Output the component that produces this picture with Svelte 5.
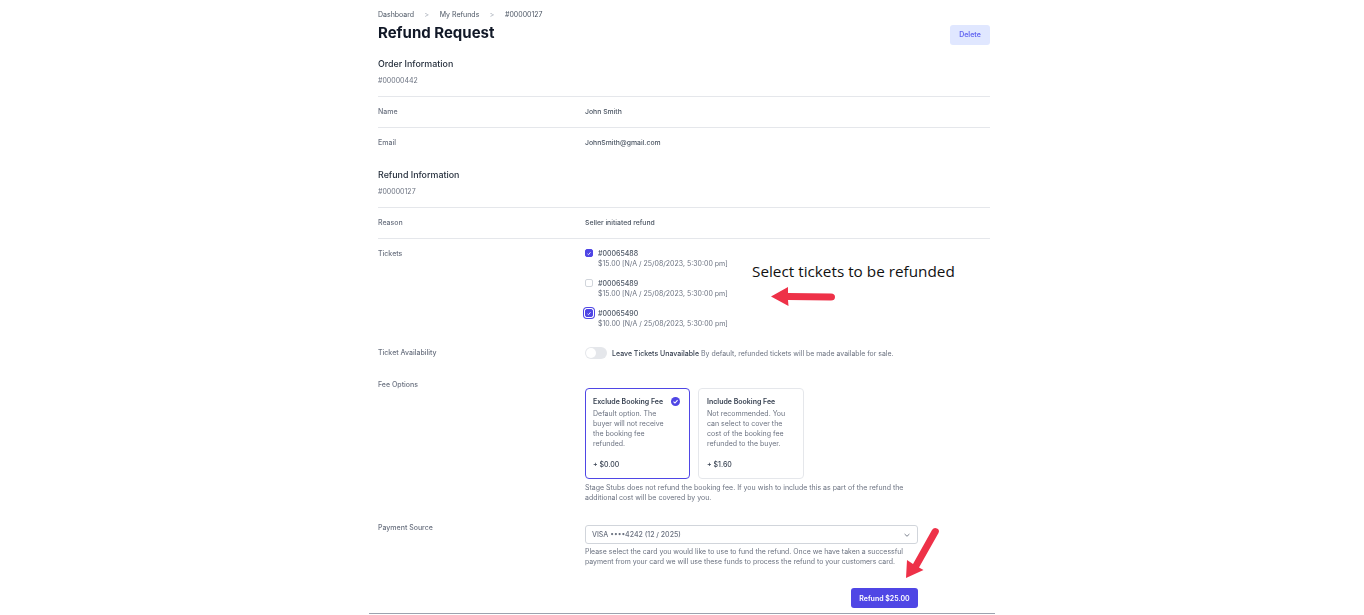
<script>
  const crumbs = ['Dashboard', 'My Refunds', '#00000127'];
  const tickets = [
    { id: '#00065488', info: '$15.00 [N/A / 25/08/2023, 5:30:00 pm]', checked: true },
    { id: '#00065489', info: '$15.00 [N/A / 25/08/2023, 5:30:00 pm]', checked: false },
    { id: '#00065490', info: '$10.00 [N/A / 25/08/2023, 5:30:00 pm]', checked: true, focus: true }
  ];
  const fees = [
    {
      title: 'Exclude Booking Fee',
      text: 'Default option. The buyer will not receive the booking fee refunded.',
      price: '+ $0.00',
      selected: true
    },
    {
      title: 'Include Booking Fee',
      text: 'Not recommended. You can select to cover the cost of the booking fee refunded to the buyer.',
      price: '+ $1.60',
      selected: false
    }
  ];
</script>

<div class="page">
  <main class="sheet">
    <header class="top">
      <div class="titles">
        <nav class="crumbs">
          {#each crumbs as crumb, i}
            {#if i > 0}<span class="sep">&gt;</span>{/if}
            <span>{crumb}</span>
          {/each}
        </nav>
        <h1>Refund Request</h1>
      </div>
      <button type="button" class="delete">Delete</button>
    </header>

    <section class="head first">
      <h2>Order Information</h2>
      <p>#00000442</p>
    </section>
    <div class="row line">
      <span class="label">Name</span>
      <span class="value">John Smith</span>
    </div>
    <div class="row line email-row">
      <span class="label">Email</span>
      <span class="value">JohnSmith@gmail.com</span>
    </div>

    <section class="head second">
      <h2>Refund Information</h2>
      <p>#00000127</p>
    </section>
    <div class="row line">
      <span class="label">Reason</span>
      <span class="value">Seller initiated refund</span>
    </div>

    <div class="row line tickets-row">
      <span class="label">Tickets</span>
      <div class="tickets">
        {#each tickets as t}
          <div class="ticket">
            <span class="box" class:on={t.checked} class:focus={t.focus}>
              {#if t.checked}
                <svg viewBox="0 0 10 10" width="7" height="7"><path d="M2.5 5.5 4.2 7 7.5 3" fill="none" stroke="#fff" stroke-width="1.4" /></svg>
              {/if}
            </span>
            <div>
              <div class="tid">{t.id}</div>
              <div class="tinfo">{t.info}</div>
            </div>
          </div>
        {/each}
      </div>
    </div>

    <div class="row avail-row">
      <span class="label">Ticket Availability</span>
      <div class="avail">
        <span class="toggle"><span class="knob"></span></span>
        <span class="strong">Leave Tickets Unavailable</span>
        <span class="hint">By default, refunded tickets will be made available for sale.</span>
      </div>
    </div>

    <div class="row fee-row">
      <span class="label">Fee Options</span>
      <div>
        <div class="cards">
          {#each fees as fee}
            <div class="card" class:selected={fee.selected}>
              <div class="card-title">{fee.title}</div>
              {#if fee.selected}
                <svg class="tick" viewBox="0 0 10 10" width="9" height="9">
                  <circle cx="5" cy="5" r="5" fill="#4f46e5" />
                  <path d="M2.8 5.2 4.4 6.7 7.3 3.6" fill="none" stroke="#fff" stroke-width="1.2" />
                </svg>
              {/if}
              <p>{fee.text}</p>
              <div class="price">{fee.price}</div>
            </div>
          {/each}
        </div>
        <p class="help fee-help">Stage Stubs does not refund the booking fee. If you wish to include this as part of the refund the additional cost will be covered by you.</p>
      </div>
    </div>

    <div class="row pay-row">
      <span class="label">Payment Source</span>
      <div>
        <div class="select">
          <span>VISA ••••4242 (12 / 2025)</span>
          <svg viewBox="0 0 10 10" width="8" height="8"><path d="M2 3.8 5 6.6 8 3.8" fill="none" stroke="#6b7280" stroke-width="1.1" /></svg>
        </div>
        <p class="help pay-help">Please select the card you would like to use to fund the refund. Once we have taken a successful payment from your card we will use these funds to process the refund to your customers card.</p>
      </div>
    </div>

    <div class="actions">
      <button type="button" class="refund">Refund $25.00</button>
    </div>
  </main>

  <div class="note">Select tickets to be refunded</div>
  <svg class="arrow-left" viewBox="0 0 66 21" width="66" height="21">
    <path d="M1 10.500 18 1 18 7 61 7.500Q65 7.500 65 11T61 14.500L18 14 18.500 20Z" fill="#ee3148" />
  </svg>
  <svg class="arrow-down" viewBox="0 0 36 56" width="36" height="56">
    <path d="M1 52 2 34 8 38 27 4Q29 1 32 2.500T33.500 7L14 41.500 18.500 44Z" fill="#ee3148" />
  </svg>
</div>

<style>
  :global(body) {
    background: #fff;
  }

  .page {
    position: relative;
    width: 1364px;
    height: 615px;
    overflow: hidden;
    background: #fff;
    font-family: Inter, 'Liberation Sans', sans-serif;
    font-size: 7px;
    color: #374151;
  }

  .sheet {
    width: 626px;
    height: 614px;
    box-sizing: border-box;
    margin-left: 369px;
    padding: 0 5px 0 9px;
    border-bottom: 1px solid #9ca3af;
    display: flex;
    flex-direction: column;
    filter: blur(0.3px);
  }

  .top {
    display: flex;
    justify-content: space-between;
    height: 45px;
    align-items: flex-end;
  }

  .titles {
    padding-bottom: 2px;
  }

  .crumbs {
    display: flex;
    align-items: center;
    height: 10px;
    color: #4b5563;
  }

  .sep {
    margin: 0 10.5px;
    color: #9ca3af;
  }

  h1 {
    margin: 4px 0 0;
    font-size: 15px;
    line-height: 20px;
    font-weight: 700;
    color: #111827;
  }

  .delete {
    width: 40px;
    height: 20px;
    padding: 0 0 1px;
    border: 0;
    border-radius: 3px;
    background: #e0e7ff;
    color: #6366f1;
    font: 600 7px Inter, 'Liberation Sans', sans-serif;
  }

  .head {
    box-sizing: border-box;
    border-bottom: 1px solid #e5e7eb;
  }

  .head.first {
    height: 52px;
    padding-top: 13px;
  }

  .head.second {
    height: 49px;
    padding-top: 10px;
  }

  h2 {
    margin: 0;
    font-size: 8.9px;
    line-height: 12px;
    font-weight: 500;
    color: #1f2937;
  }

  .head p {
    margin: 5px 0 0;
    line-height: 12px;
    color: #6b7280;
  }

  .row {
    display: grid;
    grid-template-columns: 207px 1fr;
    box-sizing: border-box;
    align-items: start;
  }

  .row.line {
    height: 31px;
    padding-top: 9px;
    line-height: 12px;
  }

  .head + .row.line {
    height: 30px;
  }

  .row.line + .row.line {
    border-top: 1px solid #e5e7eb;
  }

  .row.email-row {
    height: 32px;
  }

  .label {
    color: #6b7280;
    font-weight: 500;
    line-height: 12px;
  }

  .value {
    color: #4b5563;
    font-size: 6.85px;
    font-weight: 500;
  }

  .row.tickets-row {
    height: 99px;
  }

  .tickets {
    display: flex;
    flex-direction: column;
    gap: 10px;
    margin-top: 1px;
  }

  .ticket {
    display: flex;
    gap: 5px;
    height: 20px;
  }

  .box {
    box-sizing: border-box;
    width: 8px;
    height: 8px;
    border: 1px solid #d1d5db;
    border-radius: 2px;
    display: flex;
    align-items: center;
    justify-content: center;
  }

  .box.on {
    background: #4f46e5;
    border-color: #4f46e5;
  }

  .box.focus {
    box-shadow: 0 0 0 1px #fff, 0 0 0 2px #4f46e5;
  }

  .tid {
    font-weight: 500;
    line-height: 10px;
    color: #4b5563;
  }

  .tinfo {
    line-height: 10px;
    color: #6b7280;
  }

  .avail-row {
    height: 32px;
    padding-top: 10px;
  }

  .avail {
    display: flex;
    align-items: center;
    height: 12px;
  }

  .toggle {
    box-sizing: border-box;
    width: 22px;
    height: 12px;
    padding: 1px;
    margin-right: 5px;
    border-radius: 6px;
    background: #e5e7eb;
  }

  .knob {
    display: block;
    width: 10px;
    height: 10px;
    border-radius: 50%;
    background: #fff;
  }

  .strong {
    font-weight: 500;
    color: #374151;
    margin-right: 2px;
  }

  .hint {
    font-size: 6.95px;
    color: #6b7280;
  }

  .fee-row {
    height: 143px;
    padding-top: 10px;
  }

  .cards {
    display: flex;
    gap: 8px;
    margin-top: 9px;
  }

  .card {
    position: relative;
    box-sizing: border-box;
    width: 105px;
    height: 91px;
    padding: 8px 7px 7px;
    border: 1px solid #e5e7eb;
    border-radius: 4px;
    display: flex;
    flex-direction: column;
  }

  .card:last-child {
    width: 106px;
    padding-left: 8px;
  }

  .card.selected {
    border-color: #4f46e5;
  }

  .card-title {
    font-weight: 600;
    line-height: 10px;
    color: #374151;
  }

  .tick {
    position: absolute;
    top: 8px;
    right: 9px;
  }

  .card p {
    width: 80px;
    margin: 2px 0 0;
    line-height: 10px;
    color: #6b7280;
  }

  .price {
    margin-top: auto;
    line-height: 12px;
    font-weight: 500;
    color: #374151;
  }

  .help {
    margin: 0;
    line-height: 10px;
    color: #6b7280;
  }

  .fee-help {
    margin-top: 4px;
    width: 330px;
  }

  .pay-row {
    height: 76px;
    padding-top: 10px;
  }

  .select {
    box-sizing: border-box;
    width: 333px;
    height: 19px;
    margin-top: 3px;
    padding: 0 6px;
    display: flex;
    align-items: center;
    justify-content: space-between;
    border: 1px solid #d1d5db;
    border-radius: 3px;
    color: #6b7280;
    font-weight: 500;
  }

  .pay-help {
    margin-top: 3px;
    width: 333px;
    font-size: 6.95px;
  }

  .actions {
    display: flex;
    justify-content: flex-end;
    width: 540px;
  }

  .refund {
    width: 67px;
    height: 20px;
    padding: 0;
    border: 0;
    border-radius: 3px;
    background: #4f46e5;
    color: #fff;
    font: 600 7px Inter, 'Liberation Sans', sans-serif;
  }

  .note {
    position: absolute;
    left: 752px;
    top: 262px;
    font-family: 'Open Sans', 'Liberation Sans', sans-serif;
    font-size: 15.3px;
    line-height: 18px;
    color: #111;
    white-space: nowrap;
  }

  .arrow-left {
    position: absolute;
    left: 770px;
    top: 286px;
  }

  .arrow-down {
    position: absolute;
    left: 905px;
    top: 526px;
  }
</style>
